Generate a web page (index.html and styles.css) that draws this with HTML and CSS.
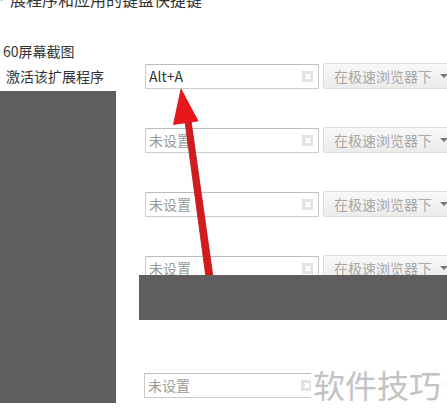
FILE: index.html
```html
<!DOCTYPE html>
<html lang="zh-CN">
<head>
<meta charset="utf-8">
<title>键盘快捷键</title>
<link rel="stylesheet" href="styles.css">
</head>
<body>
<div class="page">
  <div class="title"><span class="cut">'</span>展程序和应用的键盘快捷键</div>
  <div class="ext">
    <div class="ext-name">60屏幕截图</div>
    <div class="row">
      <div class="cmd">激活该扩展程序</div>
      <div class="field"><span class="val">Alt+A</span><span class="clear"></span></div>
      <div class="scope">在极速浏览器下<span class="caret"></span></div>
    </div>
    <div class="row">
      <div class="cmd"></div>
      <div class="field"><span class="val empty">未设置</span><span class="clear"></span></div>
      <div class="scope">在极速浏览器下<span class="caret"></span></div>
    </div>
    <div class="row">
      <div class="cmd"></div>
      <div class="field"><span class="val empty">未设置</span><span class="clear"></span></div>
      <div class="scope">在极速浏览器下<span class="caret"></span></div>
    </div>
    <div class="row">
      <div class="cmd"></div>
      <div class="field"><span class="val empty">未设置</span><span class="clear"></span></div>
      <div class="scope">在极速浏览器下<span class="caret"></span></div>
    </div>
    <div class="row last">
      <div class="cmd"></div>
      <div class="field"><span class="val empty">未设置</span><span class="clear"></span></div>
      <div class="scope">在极速浏览器下<span class="caret"></span></div>
    </div>
  </div>

  <svg class="arrow" width="447" height="420" viewBox="0 0 447 420">
    <polygon points="184.5,118 190.5,117 214,284 207,285" fill="#d41a1c" stroke="#b3161a" stroke-width="0.8"/>
    <polygon points="181,89 173.5,124.5 198,121" fill="#e8161b" stroke="#c81518" stroke-width="0.8"/>
  </svg>

  <div class="redact redact-left"></div>
  <div class="redact redact-bottom"></div>
  <div class="watermark">软件技巧</div>
</div>
</body>
</html>
```
FILE: styles.css
```css
html, body {
  margin: 0;
  padding: 0;
  background: #ffffff;
}
body {
  width: 447px;
  height: 420px;
  overflow: hidden;
  font-family: "Noto Sans CJK SC", "Liberation Sans", sans-serif;
  color: #333333;
}
.page {
  position: relative;
  width: 447px;
  height: 420px;
  overflow: hidden;
}
.title {
  font-size: 16px;
  line-height: 20px;
  height: 20px;
  margin-top: -11px;
  padding-left: 10px;
  color: #333;
  white-space: nowrap;
  position: relative;
}
.title .cut {
  position: absolute;
  left: 0;
  top: 8px;
  font-size: 12px;
  line-height: 12px;
  color: #555;
}
.ext {
  padding-top: 32px;
}
.ext-name {
  font-size: 14px;
  line-height: 20px;
  padding-left: 3px;
  height: 20px;
  color: #333;
}
.row {
  display: flex;
  align-items: center;
  height: 26px;
  margin-top: 2px;
  white-space: nowrap;
  width: 447px;
}
.row + .row {
  margin-top: 38px;
}
.row.last {
  margin-top: 91px;
}
.row.last .field {
  margin-left: -1px;
}
.cmd {
  flex: none;
  box-sizing: border-box;
  width: 145px;
  padding-left: 6px;
  font-size: 14px;
  line-height: 20px;
  color: #333;
}
.field {
  flex: none;
  box-sizing: border-box;
  width: 174px;
  height: 25px;
  border: 1px solid #cccccc;
  border-top-color: #bdbdbd;
  background: #fff;
  display: flex;
  align-items: center;
  justify-content: space-between;
  padding: 0 4px 0 3px;
}
.val {
  font-size: 14px;
  line-height: 20px;
  color: #333;
}
.val.empty {
  color: #9a9a9a;
}
.clear {
  width: 11px;
  height: 11px;
  background: #e2e2e2;
  position: relative;
  margin-right: 1px;
}
.clear::before, .clear::after {
  content: "";
  position: absolute;
  left: 5px;
  top: 2px;
  width: 1.5px;
  height: 7px;
  background: #fff;
  transform: rotate(45deg);
}
.clear::after {
  transform: rotate(-45deg);
}
.scope {
  box-sizing: border-box;
  flex: none;
  width: 132px;
  height: 26px;
  margin-left: 4px;
  border: 1px solid #dcdcdc;
  border-radius: 2px;
  background: linear-gradient(#f8f8f8, #ececec);
  font-size: 14px;
  line-height: 24px;
  color: #a8a8a8;
  padding-left: 10px;
  display: flex;
  align-items: center;
}
.caret {
  margin-left: 8px;
  width: 0;
  height: 0;
  border-left: 4px solid transparent;
  border-right: 4px solid transparent;
  border-top: 4px solid #777;
}
.arrow {
  position: absolute;
  left: 0;
  top: 0;
  pointer-events: none;
}
.redact {
  position: absolute;
  background: #5f5d5e;
}
.redact-left {
  left: 0;
  top: 91px;
  width: 116px;
  height: 312px;
}
.redact-bottom {
  left: 139px;
  top: 275px;
  width: 308px;
  height: 45px;
}
.watermark {
  position: absolute;
  left: 311px;
  top: 362px;
  width: 136px;
  height: 44px;
  background: rgba(255, 255, 255, 0.95);
  font-size: 32px;
  line-height: 44px;
  color: #c2c2c2;
  padding-left: 2px;
  white-space: nowrap;
  box-sizing: border-box;
}
```
